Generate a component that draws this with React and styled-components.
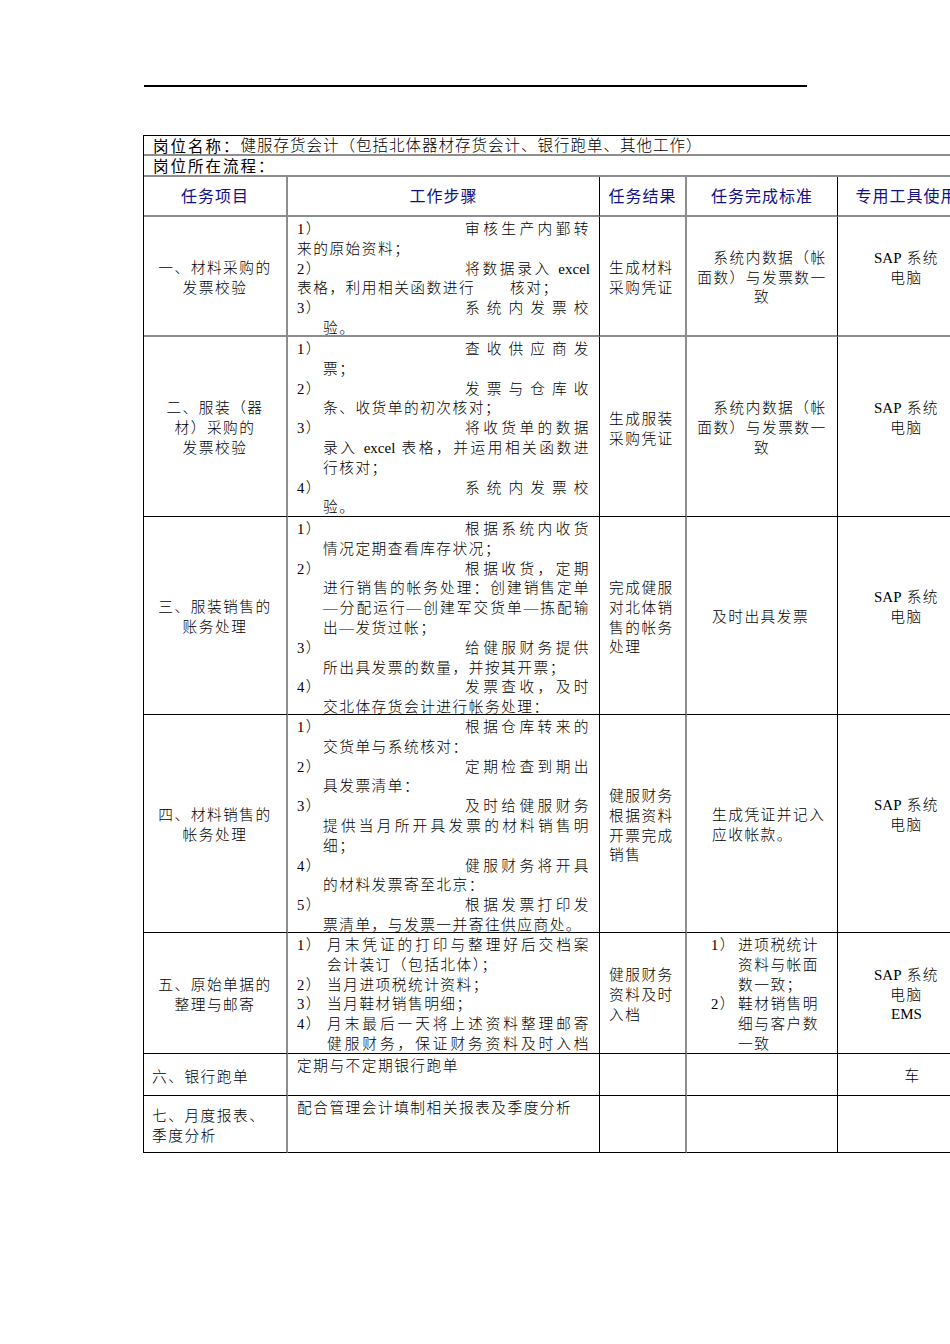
import React from 'react';
import styled, { createGlobalStyle } from 'styled-components';

const GlobalStyle = createGlobalStyle`
  html, body { margin: 0; padding: 0; background: #fff; overflow: hidden; }
  body {
    font-family: "Liberation Serif", "Noto Sans CJK SC", serif;
    color: #000;
  }
`;

const SOFT = '2px solid #8e8e8e';
const HARD = '1px solid #000';

const Page = styled.div`
  box-sizing: border-box;
  width: 950px;
  padding: 85px 0 0 143px;
`;

const Rule = styled.div`
  margin-left: 1px;
  width: 663px;
  height: 2px;
  background: #000;
`;

const Sheet = styled.div`
  margin-top: 48px;
  display: grid;
  grid-template-columns: 144px 312px 87px 151px 138px;
  grid-template-rows: 20px 21px 40px 120px 180px 198px 218px 121px 42px 57px;
  width: 833px;
  box-sizing: border-box;
  border-top: 1px solid #000;
  border-left: 1px solid #000;
`;

const Cell = styled.div`
  box-sizing: border-box;
  min-width: 0;
  overflow: hidden;
  border-right: ${(p) => p.$rb || HARD};
  border-bottom: ${(p) => p.$bb || HARD};
  font-size: 14.7px;
  letter-spacing: 1.5px;
  line-height: 19.8px;
  font-weight: 300;
  white-space: nowrap;
`;

const Latin = styled.span`
  font-size: 15px;
  letter-spacing: 0;
  font-weight: 400;
`;

const InfoCell = styled(Cell)`
  grid-column: 1 / -1;
  display: flex;
  align-items: center;
  padding-left: 9px;
  font-size: 15.5px;
  letter-spacing: 1px;
  line-height: 19px;
  overflow: visible;
`;

const InfoLabel = styled.span`
  font-family: "Noto Sans CJK SC", sans-serif;
  font-weight: 400;
  letter-spacing: 2px;
`;

const HeadCell = styled(Cell)`
  display: flex;
  align-items: center;
  justify-content: center;
  font-family: "Noto Sans CJK SC", sans-serif;
  font-weight: 400;
  font-size: 16px;
  letter-spacing: 1px;
  color: #101088;
`;

const TaskCell = styled(Cell)`
  display: flex;
  flex-direction: column;
  justify-content: center;
  align-items: ${(p) => (p.$left ? 'flex-start' : 'center')};
  padding-left: ${(p) => (p.$left ? '8px' : '0')};
  padding-top: ${(p) => (p.$left ? '6px' : '5px')};
`;

const StepsCell = styled(Cell)`
  padding: 3px 9px 0 9px;
`;

const Line = styled.div`
  display: flex;
  height: 19.8px;
  justify-content: space-between;
  padding-left: ${(p) => p.$ind || 0}px;
`;

const Num = styled.span`
  flex: none;
  width: ${(p) => p.$w || 'auto'};
`;

const Lead = styled.span`
  width: 125px;
  flex: none;
  text-align: justify;
  text-align-last: justify;
`;

const Body = styled.span`
  flex: 1;
  min-width: 0;
  text-align: ${(p) => (p.$j ? 'justify' : 'left')};
  text-align-last: ${(p) => (p.$j ? 'justify' : 'left')};
`;

const Gap = styled.span`
  display: inline-block;
  width: ${(p) => p.$w}px;
`;

const ResultCell = styled(Cell)`
  display: flex;
  flex-direction: column;
  justify-content: center;
  padding-left: 9px;
  padding-top: 6px;
`;

const StandardCell = styled(Cell)`
  display: flex;
  flex-direction: column;
  justify-content: ${(p) => (p.$top ? 'flex-start' : 'center')};
  align-items: ${(p) => (p.$center ? 'center' : 'stretch')};
  padding: ${(p) => (p.$top ? '3px 0 0 24px' : p.$center ? '5px 0 0 0' : '5px 0 0 25px')};
`;

const CenterLine = styled.div`
  text-align: center;
  padding-left: ${(p) => p.$shift || 0}px;
`;

const TextLine = styled.div``;

const ToolCell = styled(Cell)`
  display: flex;
  flex-direction: column;
  justify-content: center;
  align-items: center;
  padding-top: 5px;
  padding-bottom: ${(p) => (p.$pad ? '20px' : '0')};
  padding-left: ${(p) => p.$shift || 0}px;
`;

const ListItem = styled.div`
  display: flex;
`;

const ListNum = styled.span`
  width: 27px;
  flex: none;
`;

const ListBody = styled.div``;

function tx(str) {
  if (!str) return null;
  const parts = str.split(/([A-Za-z]+)/);
  return parts.map((p, i) => (/^[A-Za-z]+$/.test(p) ? <Latin key={i}>{p}</Latin> : p));
}

const rowsData = [
  {
    task: ['一、材料采购的', '发票校验'],
    steps: [
      { n: '1）', lead: '审核生产内鄞转' },
      { t: '来的原始资料；' },
      { n: '2）', lead: '将数据录入 excel' },
      { t: '表格，利用相关函数进行', gap: 35, after: '核对；' },
      { n: '3）', lead: '系统内发票校' },
      { t: '验。', ind: 26 },
    ],
    result: ['生成材料', '采购凭证'],
    standard: { type: 'center', lines: ['系统内数据（帐', '面数）与发票数一', '致'] },
    tool: ['SAP 系统', '电脑'],
    toolPad: true,
    bb: SOFT,
  },
  {
    task: ['二、服装（器', '材）采购的', '发票校验'],
    steps: [
      { n: '1）', lead: '查收供应商发' },
      { t: '票；', ind: 26 },
      { n: '2）', lead: '发票与仓库收' },
      { t: '条、收货单的初次核对；', ind: 26 },
      { n: '3）', lead: '将收货单的数据' },
      { t: '录入 excel 表格，并运用相关函数进', ind: 26, j: true },
      { t: '行核对；', ind: 26 },
      { n: '4）', lead: '系统内发票校' },
      { t: '验。', ind: 26 },
    ],
    result: ['生成服装', '采购凭证'],
    standard: { type: 'center', lines: ['系统内数据（帐', '面数）与发票数一', '致'] },
    tool: ['SAP 系统', '电脑'],
    toolPad: true,
  },
  {
    task: ['三、服装销售的', '账务处理'],
    steps: [
      { n: '1）', lead: '根据系统内收货' },
      { t: '情况定期查看库存状况；', ind: 26 },
      { n: '2）', lead: '根据收货，定期' },
      { t: '进行销售的帐务处理：创建销售定单', ind: 26, j: true },
      { t: '—分配运行—创建军交货单—拣配输', ind: 26, j: true },
      { t: '出—发货过帐；', ind: 26 },
      { n: '3）', lead: '给健服财务提供' },
      { t: '所出具发票的数量，并按其开票；', ind: 26 },
      { n: '4）', lead: '发票查收，及时' },
      { t: '交北体存货会计进行帐务处理：', ind: 26 },
    ],
    result: ['完成健服', '对北体销', '售的帐务', '处理'],
    standard: { type: 'left', lines: ['及时出具发票'] },
    tool: ['SAP 系统', '电脑'],
    toolPad: true,
  },
  {
    task: ['四、材料销售的', '帐务处理'],
    steps: [
      { n: '1）', lead: '根据仓库转来的' },
      { t: '交货单与系统核对：', ind: 26 },
      { n: '2）', lead: '定期检查到期出' },
      { t: '具发票清单：', ind: 26 },
      { n: '3）', lead: '及时给健服财务' },
      { t: '提供当月所开具发票的材料销售明', ind: 26, j: true },
      { t: '细；', ind: 26 },
      { n: '4）', lead: '健服财务将开具' },
      { t: '的材料发票寄至北京：', ind: 26 },
      { n: '5）', lead: '根据发票打印发' },
      { t: '票清单，与发票一并寄往供应商处。', ind: 26 },
    ],
    result: ['健服财务', '根据资料', '开票完成', '销售'],
    standard: { type: 'left', lines: ['生成凭证并记入', '应收帐款。'] },
    tool: ['SAP 系统', '电脑'],
    toolPad: true,
  },
  {
    task: ['五、原始单据的', '整理与邮寄'],
    steps: [
      { n: '1）', hang: '月末凭证的打印与整理好后交档案', j: true },
      { t: '会计装订（包括北体）；', ind: 30 },
      { n: '2）', hang: '当月进项税统计资料；' },
      { n: '3）', hang: '当月鞋材销售明细；' },
      { n: '4）', hang: '月末最后一天将上述资料整理邮寄', j: true },
      { t: '健服财务，保证财务资料及时入档', ind: 30, j: true },
    ],
    result: ['健服财务', '资料及时', '入档'],
    standard: {
      type: 'list',
      items: [
        ['1）', ['进项税统计', '资料与帐面', '数一致；']],
        ['2）', ['鞋材销售明', '细与客户数', '一致']],
      ],
    },
    tool: ['SAP 系统', '电脑', 'EMS'],
  },
  {
    task: ['六、银行跑单'],
    taskLeft: true,
    steps: [{ t: '定期与不定期银行跑单' }],
    result: [],
    standard: { type: 'left', lines: [] },
    tool: ['车'],
    toolShift: 12,
  },
  {
    task: ['七、月度报表、', '季度分析'],
    taskLeft: true,
    steps: [{ t: '配合管理会计填制相关报表及季度分析' }],
    result: [],
    standard: { type: 'left', lines: [] },
    tool: [],
  },
];

function StepLine({ s }) {
  if (s.lead) {
    return (
      <Line>
        <Num>{s.n}</Num>
        <Lead>{tx(s.lead)}</Lead>
      </Line>
    );
  }
  if (s.hang) {
    return (
      <Line>
        <Num $w="30px">{s.n}</Num>
        <Body $j={s.j}>{tx(s.hang)}</Body>
      </Line>
    );
  }
  return (
    <Line $ind={s.ind}>
      <Body $j={s.j}>
        {tx(s.t)}
        {s.gap ? <Gap $w={s.gap} /> : null}
        {tx(s.after)}
      </Body>
    </Line>
  );
}

function Standard({ d, bb }) {
  if (d.type === 'center') {
    return (
      <StandardCell $center $bb={bb}>
        {d.lines.map((l, i) => (
          <CenterLine key={i} $shift={i === 0 ? 16 : 0}>
            {l}
          </CenterLine>
        ))}
      </StandardCell>
    );
  }
  if (d.type === 'list') {
    return (
      <StandardCell $top $bb={bb}>
        {d.items.map(([n, lines], i) => (
          <ListItem key={i}>
            <ListNum>{n}</ListNum>
            <ListBody>
              {lines.map((l, j) => (
                <TextLine key={j}>{l}</TextLine>
              ))}
            </ListBody>
          </ListItem>
        ))}
      </StandardCell>
    );
  }
  return (
    <StandardCell $bb={bb}>
      {d.lines.map((l, i) => (
        <TextLine key={i}>{l}</TextLine>
      ))}
    </StandardCell>
  );
}

export default function App() {
  return (
    <>
      <GlobalStyle />
      <Page>
        <Rule />
        <Sheet>
          <InfoCell $bb={SOFT}>
            <InfoLabel>岗位名称：</InfoLabel>
            健服存货会计（包括北体器材存货会计、银行跑单、其他工作）
          </InfoCell>
          <InfoCell $bb={SOFT}>
            <InfoLabel>岗位所在流程：</InfoLabel>
          </InfoCell>

          <HeadCell $rb={SOFT} $bb={SOFT}>任务项目</HeadCell>
          <HeadCell $bb={SOFT}>工作步骤</HeadCell>
          <HeadCell $rb={SOFT} $bb={SOFT}>任务结果</HeadCell>
          <HeadCell $bb={SOFT}>任务完成标准</HeadCell>
          <HeadCell $bb={SOFT}>专用工具使用</HeadCell>

          {rowsData.map((r, i) => (
            <React.Fragment key={i}>
              <TaskCell $rb={SOFT} $bb={r.bb} $left={r.taskLeft}>
                {r.task.map((t, j) => (
                  <TextLine key={j}>{t}</TextLine>
                ))}
              </TaskCell>
              <StepsCell $bb={r.bb}>
                {r.steps.map((s, j) => (
                  <StepLine key={j} s={s} />
                ))}
              </StepsCell>
              <ResultCell $rb={SOFT} $bb={r.bb}>
                {r.result.map((t, j) => (
                  <TextLine key={j}>{t}</TextLine>
                ))}
              </ResultCell>
              <Standard d={r.standard} bb={r.bb} />
              <ToolCell $bb={r.bb} $pad={r.toolPad} $shift={r.toolShift}>
                {r.tool.map((t, j) => (
                  <TextLine key={j}>{tx(t)}</TextLine>
                ))}
              </ToolCell>
            </React.Fragment>
          ))}
        </Sheet>
      </Page>
    </>
  );
}
